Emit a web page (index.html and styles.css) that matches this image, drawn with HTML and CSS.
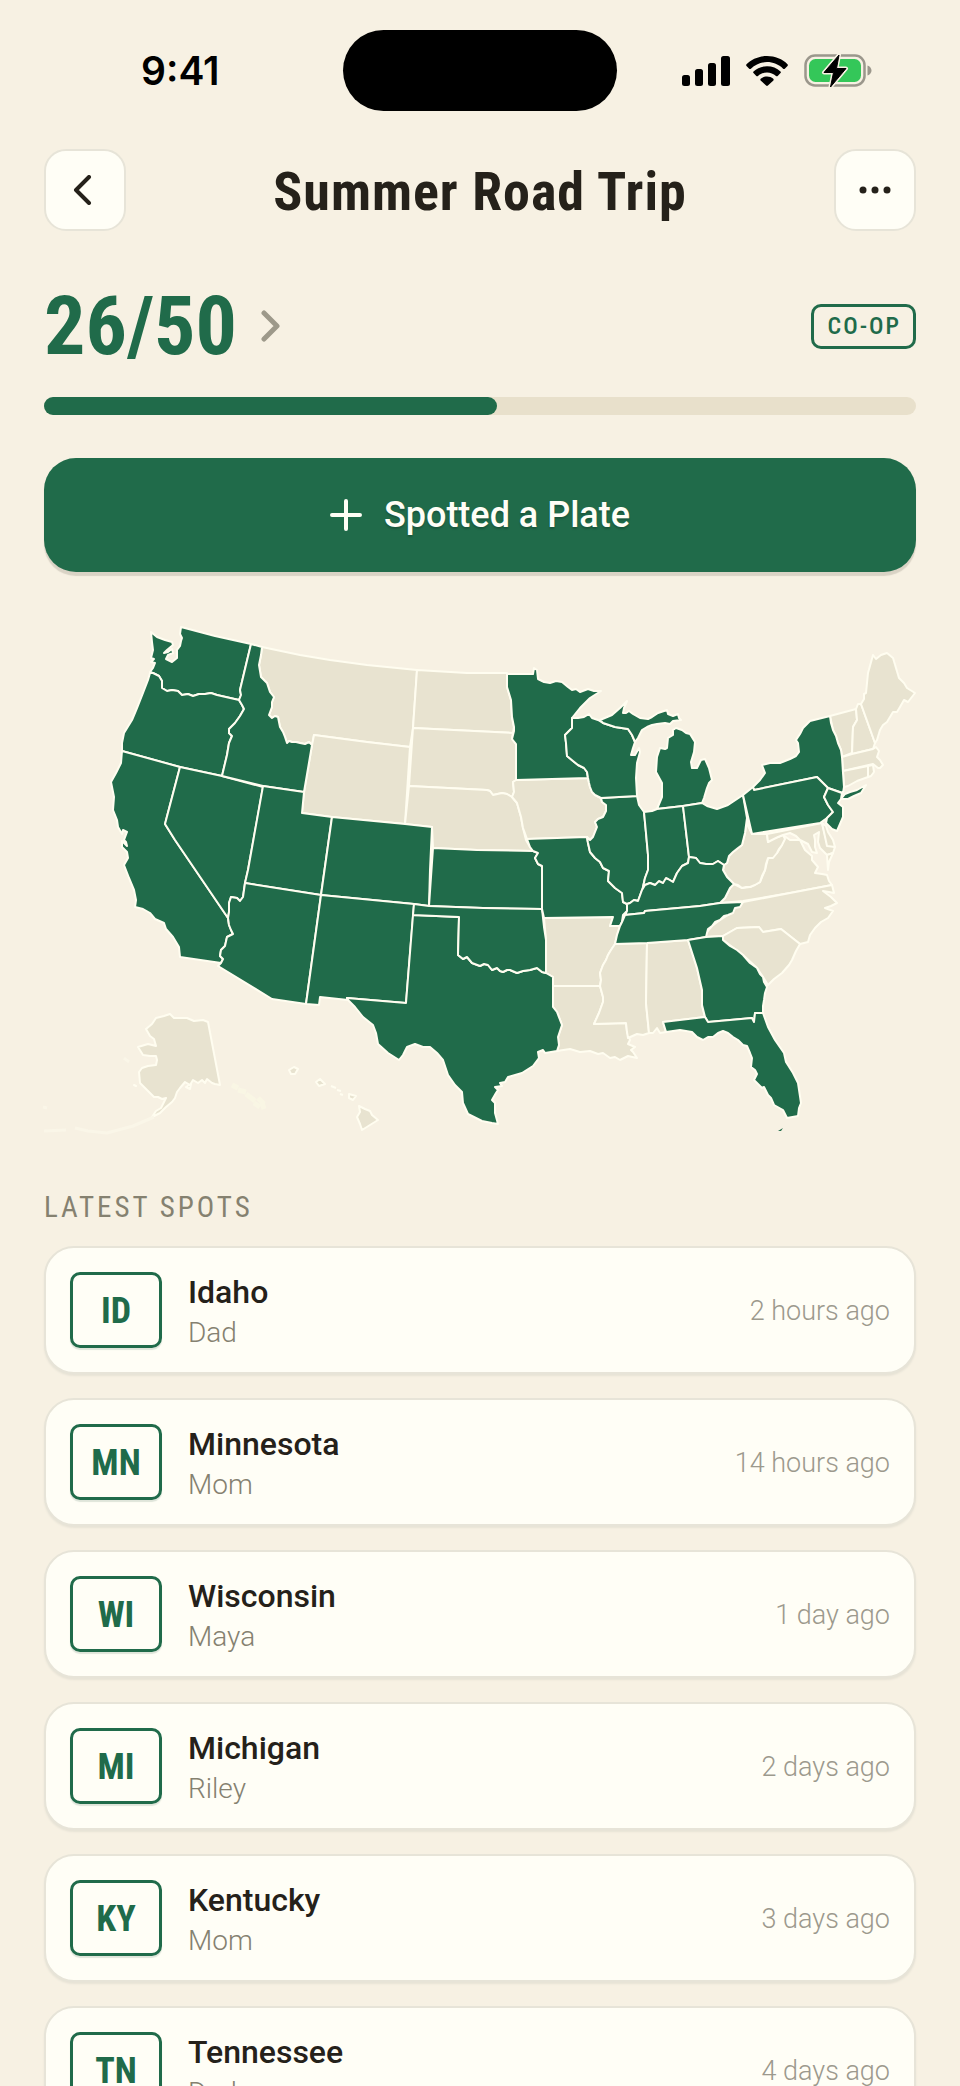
FILE: index.html
```html
<!DOCTYPE html>
<html lang="en">
<head>
    <meta charset="UTF-8">
    <meta name="viewport" content="width=device-width, initial-scale=1.0">
    <title>Summer Road Trip</title>
    <link rel="stylesheet" href="styles.css">
</head>
<body>
    <div class="app">
        <div class="status-bar">
            <span class="clock">9:41</span>
            <span class="island"></span>
            <span class="status-icons">
                <svg width="48" height="30" viewBox="0 0 48 30">
                    <rect x="0" y="19" width="8" height="11" rx="2.5"/>
                    <rect x="13" y="13" width="8" height="17" rx="2.5"/>
                    <rect x="26" y="7" width="8" height="23" rx="2.5"/>
                    <rect x="39" y="0" width="9" height="30" rx="2.5"/>
                </svg>
                <svg width="42" height="30" viewBox="0 0 42 30">
                    <path d="M21 0C29 0 36.500 3 41.500 8.200c.5.5.5 1.300 0 1.800l-2.700 2.700c-.5.5-1.200.5-1.700 0C32.700 8.500 27 6.100 21 6.100S9.300 8.500 4.900 12.700c-.5.5-1.200.5-1.700 0L.5 10c-.5-.5-.5-1.300 0-1.800C5.500 3 13 0 21 0z"/>
                    <path d="M21 10.200c5.200 0 9.900 1.900 13.500 5.200.5.500.5 1.200 0 1.700l-2.800 2.800c-.5.500-1.200.5-1.700.1-2.500-2.200-5.600-3.500-9-3.500s-6.500 1.300-9 3.500c-.5.400-1.200.4-1.700-.1l-2.800-2.800c-.5-.5-.5-1.200 0-1.700 3.600-3.300 8.300-5.200 13.500-5.200z"/>
                    <path d="M21 20.500c2.400 0 4.600.8 6.300 2.200.5.400.5 1.200.1 1.700l-5.500 5.200c-.5.500-1.300.5-1.800 0l-5.500-5.200c-.4-.5-.4-1.300.1-1.700 1.700-1.400 3.900-2.200 6.300-2.200z"/>
                </svg>
                <svg width="68" height="34" viewBox="0 0 68 34">
                    <rect x="1.500" y="1.500" width="59" height="30" rx="9.500" fill="none" stroke="#9b978c" stroke-width="2.500"/>
                    <path d="M63.500 11.500c2.500.8 4 2.800 4 5s-1.500 4.200-4 5z" fill="#9b978c"/>
                    <rect x="5" y="5" width="52" height="23" rx="6.500" fill="#34c759"/>
                    <path d="M35 1L20 18.500h9.500L26.500 33 42 14.500h-9.500z" stroke="#f8f1e3" stroke-width="4" stroke-linejoin="round"/>
                    <path d="M35 1L20 18.500h9.500L26.500 33 42 14.500h-9.500z" stroke="#000" stroke-width="1" stroke-linejoin="round"/>
                </svg>
            </span>
        </div>

        <header class="top-bar">
            <button class="icon-button" aria-label="Back">
                <svg width="24" height="30" viewBox="0 0 24 30"><path d="M16 2L3 15l13 13"/></svg>
            </button>
            <h1>Summer Road Trip</h1>
            <button class="icon-button" aria-label="More">
                <svg class="dots" width="32" height="8" viewBox="0 0 32 8"><circle cx="4" cy="4" r="3.500"/><circle cx="16" cy="4" r="3.500"/><circle cx="28" cy="4" r="3.500"/></svg>
            </button>
        </header>

        <main>
            <div class="score-row">
                <a class="score" href="#states">
                    <span>26/50</span>
                    <svg width="20" height="32" viewBox="0 0 20 32"><path d="M3 3l13 13L3 29"/></svg>
                </a>
                <span class="badge">CO-OP</span>
            </div>
            <div class="progress"><div class="progress-fill" style="width: 52%"></div></div>

            <button class="spot-button">
                <svg width="32" height="32" viewBox="0 0 32 32"><path d="M16 2v28M2 16h28"/></svg>
                <span>Spotted a Plate</span>
            </button>

            <svg id="states" class="map" viewBox="44 614 872 526" role="img" aria-label="Map of spotted states">
                <!-- not spotted yet -->
                <g class="missing">
                    <path d="M262 647L300 655 330 660 367 665 417 670 413 728 410 747 367 742 314 735 313 741 312 745 309 742 305 744 300 743 296 742 292 742 289 741 287 743 285 737 283 732 280 727 279 722 278 717 275 716 272 718 269 715 272 707 272 702 274 697 270 692 267 683 261 677 260 671 259 665 261 655z"/>
                    <path d="M314 735L367 742 410 747 405 824 332 817 302 813 304 792 312 745z"/>
                    <path d="M417 670L467 673 507 673 507 687 511 700 512 717 514 727 513 733 413 728z"/>
                    <path d="M413 728L513 733 512 739 516 744 516 780 513 782 514 792 512 797 507 794 502 793 493 795 490 791 487 790 409 786z"/>
                    <path d="M409 786L487 790 490 791 493 795 502 793 507 794 512 797 517 803 519 810 521 817 523 828 526 840 530 847 533 851 477 850 433 848 432 827 405 824z"/>
                    <path d="M516 780L588 778 589 783 590 787 592 792 595 795 601 798 602 802 606 805 606 811 603 817 598 819 595 822 597 827 595 832 593 837 590 840 587 837 527 839 523 828 521 817 519 810 517 803 512 797 514 792 513 782z"/>
                    <path d="M544 918L613 917 610 926 620 926 617 935 615 944 611 950 608 955 606 960 603 965 600 973 601 980 600 986 553 986 553 977 546 973 546 940z"/>
                    <path d="M553 986L600 986 603 997 603 1002 599 1013 594 1024 626 1023 627 1032 630 1040 628 1044 635 1047 631 1050 633 1052 637 1058 628 1056 624 1058 620 1060 615 1057 610 1058 603 1053 598 1054 590 1051 580 1052 570 1049 557 1051 559 1045 558 1037 562 1025 557 1012 553 1007z"/>
                    <path d="M615 944L647 943 646 1003 649 1033 643 1035 637 1034 628 1038 627 1032 626 1023 594 1024 599 1013 603 1002 603 997 600 986 601 980 600 973 603 965 606 960 608 955 611 950z"/>
                    <path d="M647 943L688 940 697 968 702 990 702 1005 705 1017 663 1022 666 1032 660 1033 657 1028 653 1033 649 1033 646 1003z"/>
                    <path d="M830 716L856 709 857 720 853 727 852 753 842 757 841 750 838 743 836 736 833 730z"/>
                    <path d="M856 709L858 704 861 704 875 743 873 749 852 754 853 727 857 720z"/>
                    <path d="M861 704L864 699 864 694 866 693 868 673 873 655 876 659 881 655 887 653 893 658 899 678 904 683 907 688 915 693 908 702 904 700 900 707 897 712 893 712 887 722 883 725 880 730 877 740 875 743z"/>
                    <path d="M842 757L852 754 873 749 876 747 879 751 877 757 880 760 883 765 880 768 878 768 873 764 843 771z"/>
                    <path d="M843 771L868 766 868 777 857 781 848 786 844 787z"/>
                    <path d="M868 766L873 765 874 772 871 776 868 777z"/>
                    <path d="M783 835L790 840 800 840 805 850 812 856 812 860 818 867 815 873 822 874 827 875 829 881 832 885 790 893 743 901 720 903 725 898 730 888 734 884 742 888 750 887 760 882 765 870 768 858 777 853 782 845z"/>
                    <path d="M747 818L748 826 752 834 767 834 768 842 773 838 778 837 783 835 785 839 782 845 779 849 777 853 773 858 768 858 766 864 765 870 762 876 760 882 755 885 750 887 746 887 742 888 738 885 734 884 730 880 727 877 723 870 724 865 727 863 729 856 733 852 738 848 742 845 745 833z"/>
                    <path d="M767 834L822 823 827 843 835 847 833 853 827 855 822 850 820 848 818 842 819 832 814 835 815 840 815 847 817 853 812 852 808 844 800 840 796 836 790 833 783 835 778 837 768 842z"/>
                    <path d="M822 823L826 826 828 832 833 840 835 847 827 846z"/>
                    <path d="M827 855L833 853 829 862 828 870z"/>
                    <path d="M743 902L790 893 832 885 834 893 829 892 823 891 831 897 837 903 831 906 825 908 833 911 828 918 821 922 815 928 810 935 808 942 804 943 800 944 781 929 763 932 759 927 737 928 723 936 706 937 706 933 712 926 720 920 728 915 735 908z"/>
                    <path d="M723 936L737 928 759 927 763 932 781 929 800 944 796 951 792 960 789 965 782 973 774 979 768 985 763 977 757 968 743 955 723 940z"/>
                    <!-- alaska -->
                    <path d="M170 1014L174 1018 187 1018 194 1021 203 1020 208 1022 220 1085 215 1084 212 1083 207 1079 205 1083 202 1080 198 1083 193 1080 190 1085 185 1082 180 1088 177 1092 175 1098 172 1102 166 1107 160 1113 152 1117 156 1111 161 1108 164 1102 166 1098 162 1099 158 1097 154 1097 151 1094 148 1091 145 1088 140 1083 139 1072 142 1068 148 1066 156 1065 157 1060 156 1056 150 1056 143 1055 138 1047 148 1044 156 1046 154 1039 150 1036 146 1029 152 1024 156 1018 164 1016z"/>
                    <path d="M186 1087l5-3-1 5zM134 1085l2 1z"/>
                    <path d="M232 1085l6 3M238 1090l8 2M246 1094l9 7M254 1103l6 4M258 1098l6 6M262 1102l2 7" class="islets"/>
                    <path d="M154 1117L133 1126 107 1133 88 1131 75 1128M66 1130L44 1131" class="reef"/>
                    <path d="M43 1107l4 1M124 1058l5 4" class="reef"/>
                    <!-- hawaii -->
                    <path d="M289 1070l5-3 4 2-3 5-4 0zM316 1082l4-3 5 5-6 2zM331 1086l5 2M337 1090l4 1M340 1094l3 1M349 1094l7 2-3 4-4-2zM359 1106L365 1109 370 1111 372 1115 378 1120 370 1125 362 1130 360 1124 357 1117 360 1112z"/>
                </g>
                <!-- spotted -->
                <g class="spotted">
                    <path d="M151 632L157 637 165 640 172 642 173 645 167 650 164 653 168 652 172 649 173 653 168 655 166 659 172 662 177 658 177 650 180 646 181 641 182 638 180 634 181 627 215 636 251 644 240 690 241 695 239 700 217 695 211 693 205 694 199 694 193 696 188 694 182 695 178 691 172 690 167 691 162 688 162 681 159 676 153 673 150 672 153 668 155 663 151 662 154 659 151 658 153 650 152 642z"/>
                    <path d="M150 673L153 673 159 676 162 681 162 688 167 691 172 690 178 691 182 695 188 694 193 696 199 694 205 694 211 693 217 695 239 700 242 705 244 709 240 716 235 723 229 729 229 733 232 736 229 743 227 755 222 776 180 767 122 751 122 743 124 733 132 720 137 708 143 693 148 680z"/>
                    <path d="M122 751L180 767 165 824 175 840 228 918 229 925 231 930 233 934 227 937 225 946 221 950 220 956 223 959 221 963 180 957 179 947 173 937 166 929 164 923 155 919 150 913 143 909 135 907 136 900 134 890 129 878 124 865 128 858 127 852 122 847 122 841 127 846 126 842 124 840 127 832 123 830 122 834 118 827 117 820 113 810 114 797 111 782 116 773 121 763z"/>
                    <path d="M180 767L222 776 263 787 248 870 245 883 243 897 240 901 237 898 231 897 229 903 229 912 228 918 175 840 165 824z"/>
                    <path d="M251 644L262 647 261 655 259 665 260 671 261 677 267 683 270 692 274 697 272 702 272 707 269 715 272 718 275 716 278 717 279 722 280 727 283 732 285 737 287 743 289 741 292 742 296 742 300 743 305 744 309 742 312 745 304 792 263 786 222 776 227 755 229 743 232 736 229 733 229 729 235 723 240 716 244 709 242 705 239 700 241 695 240 690z"/>
                    <path d="M263 786L304 792 302 813 332 817 321 895 245 883 248 870z"/>
                    <path d="M332 817L405 824 432 827 430 870 429 906 414 904 321 895z"/>
                    <path d="M245 883L321 895 306 1004 272 999 218 966 221 963 223 959 220 956 221 950 225 946 227 937 233 934 231 930 229 925 228 918 229 912 229 903 231 897 237 898 240 901 243 897z"/>
                    <path d="M321 895L414 904 406 1003 347 998 348 1000 320 997 319 1005 306 1004z"/>
                    <path d="M433 848L477 850 533 851 538 853 535 858 538 864 542 866 542 909 483 908 429 906z"/>
                    <path d="M413 915L459 917 458 955 463 959 467 957 472 963 480 966 484 964 488 965 492 970 497 968 500 971 503 972 507 970 510 970 517 973 523 971 530 970 537 968 542 972 546 973 553 977 553 1007 557 1012 562 1025 558 1037 559 1045 557 1051 545 1053 543 1050 538 1052 539 1058 533 1066 522 1073 508 1077 505 1082 500 1083 502 1086 495 1087 498 1090 496 1093 492 1100 495 1103 495 1113 498 1124 492 1123 482 1121 468 1114 463 1103 462 1092 455 1085 448 1075 443 1060 437 1053 430 1047 423 1047 415 1044 407 1047 403 1055 399 1060 388 1053 378 1044 376 1033 373 1025 363 1017 355 1007 348 1000 347 998 406 1003z"/>
                    <path d="M414 904L429 906 483 908 542 909 544 927 546 940 546 973 542 972 537 968 530 970 523 971 517 973 510 970 507 970 503 972 500 971 497 968 492 970 488 965 484 964 480 966 472 963 467 957 463 959 458 955 459 917 413 915z"/>
                    <path d="M507 674L533 674 534 668 537 670 538 679 544 682 550 683 556 681 562 682 568 687 572 690 576 689 580 692 588 689 594 691 601 691 590 698 580 708 572 718 572 728 565 735 566 743 567 756 573 761 578 765 584 768 587 772 588 778 516 780 516 744 512 739 514 731 514 727 512 717 511 700 507 687z"/>
                    <path d="M527 839L587 837 588 843 590 852 595 858 600 862 603 868 609 871 608 881 615 888 622 893 623 902 627 904 627 911 623 915 622 922 620 926 610 926 613 917 544 918 542 909 542 866 538 864 535 858 538 853 533 851 530 847z"/>
                    <path d="M601 798L637 796 639 805 644 812 646 833 648 855 648 870 645 878 643 887 642 890 638 901 634 900 630 903 627 904 623 902 622 893 615 888 608 881 609 871 603 868 600 862 595 858 590 852 588 843 587 837 590 840 593 837 595 832 597 827 595 822 598 819 603 817 606 811 606 805 602 802z"/>
                    <path d="M572 718L578 718 584 717 589 714 592 718 598 720 603 723 615 727 628 729 632 735 635 742 633 748 631 755 635 755 639 748 640 752 637 763 636 778 637 796 601 798 595 795 592 792 590 787 589 783 588 778 587 772 584 768 578 765 573 761 567 756 566 743 565 735 572 728z"/>
                    <path d="M600 720L612 715 620 708 627 701 624 708 623 713 626 713 629 711 633 714 640 718 648 719 652 717 658 713 667 710 668 714 673 716 678 714 679 718 681 720 673 721 670 724 665 723 657 724 652 725 647 727 642 730 638 738 635 742 632 735 628 729 615 727 603 723z"/>
                    <path d="M673 730L676 728 682 730 686 733 690 734 695 742 694 752 691 762 692 768 697 768 701 760 705 759 709 768 712 780 709 783 707 788 704 798 702 803 683 806 657 809 662 797 662 783 656 772 657 757 660 748 665 749 667 748 668 738 673 735z"/>
                    <path d="M644 812L652 811 657 809 683 806 689 857 688 863 682 866 677 873 673 882 668 879 663 883 655 885 650 883 645 885 643 887 645 878 648 870 648 855 646 833z"/>
                    <path d="M683 806L702 803 707 806 717 809 728 805 743 795 747 818 745 833 742 845 738 848 733 852 729 856 727 863 724 865 718 861 713 864 706 864 700 863 696 858 689 857z"/>
                    <path d="M627 904L630 903 634 900 638 901 642 890 645 885 650 883 655 885 659 881 663 883 666 878 668 879 673 882 677 873 682 866 688 863 689 857 696 858 700 863 706 864 713 864 718 861 724 865 723 870 727 877 734 884 730 888 725 898 720 903 700 906 645 911 644 913 625 915 627 911z"/>
                    <path d="M625 915L644 913 645 911 700 906 720 903 743 902 740 907 735 908 733 913 728 915 724 916 720 920 715 922 712 926 708 929 706 937 688 940 647 943 615 944 617 935 620 926 622 922z"/>
                    <path d="M688 940L706 937 723 936 723 940 730 946 737 950 743 955 750 963 757 968 760 974 763 977 764 982 767 987 765 993 764 1000 763 1006 763 1013 755 1013 754 1022 752 1018 708 1022 705 1017 702 1005 702 990 697 968z"/>
                    <path d="M663 1022L705 1017 708 1022 752 1018 754 1022 755 1013 763 1013 768 1027 775 1040 784 1053 786 1062 793 1073 798 1083 801 1103 799 1108 798 1116 787 1118 783 1110 774 1105 771 1098 768 1095 764 1087 762 1088 758 1084 754 1080 757 1074 755 1070 751 1067 752 1058 750 1053 747 1046 743 1045 738 1040 733 1037 728 1033 723 1031 718 1033 713 1037 708 1037 703 1040 697 1037 692 1032 680 1030 666 1032z"/>
                    <path d="M754 790L753 787 760 780 765 773 762 765 770 763 780 763 790 759 796 756 799 752 798 743 796 740 800 734 803 728 810 721 830 716 831 723 833 730 836 736 838 743 841 750 842 757 843 773 844 787 843 793 828 788 823 783 817 777z"/>
                    <path d="M841 799L845 794 850 792 857 790 866 785 861 793 854 796 848 799z"/>
                    <path d="M743 795L753 787 754 790 817 777 823 783 828 788 824 797 828 805 833 812 827 818 820 823 752 834z"/>
                    <path d="M828 788L842 793 841 799 838 803 843 807 843 817 840 824 837 831 832 829 826 823 827 818 833 812 828 805 824 797z"/>
                    <path d="M778 1131l5-3-2 3z" class="key"/>
                </g>
            </svg>

            <section>
                <h2>Latest Spots</h2>
                <ul class="spots">
                    <li class="spot">
                        <span class="plate">ID</span>
                        <div class="who"><strong>Idaho</strong><span>Dad</span></div>
                        <time>2 hours ago</time>
                    </li>
                    <li class="spot">
                        <span class="plate">MN</span>
                        <div class="who"><strong>Minnesota</strong><span>Mom</span></div>
                        <time>14 hours ago</time>
                    </li>
                    <li class="spot">
                        <span class="plate">WI</span>
                        <div class="who"><strong>Wisconsin</strong><span>Maya</span></div>
                        <time>1 day ago</time>
                    </li>
                    <li class="spot">
                        <span class="plate">MI</span>
                        <div class="who"><strong>Michigan</strong><span>Riley</span></div>
                        <time>2 days ago</time>
                    </li>
                    <li class="spot">
                        <span class="plate">KY</span>
                        <div class="who"><strong>Kentucky</strong><span>Mom</span></div>
                        <time>3 days ago</time>
                    </li>
                    <li class="spot">
                        <span class="plate">TN</span>
                        <div class="who"><strong>Tennessee</strong><span>Dad</span></div>
                        <time>4 days ago</time>
                    </li>
                </ul>
            </section>
        </main>
    </div>
</body>
</html>
```
FILE: styles.css
```css
* {
    box-sizing: border-box;
}
body {
    margin: 0;
    background-color: #f7f1e3;
    color: #25211a;
    font-family: Roboto, "Liberation Sans", sans-serif;
}
.app {
    height: 100vh;
    overflow: hidden;
    padding: 0 44px;
}
h1, h2, ul {
    margin: 0;
    padding: 0;
}
button {
    border: none;
    font-family: inherit;
    cursor: pointer;
}
.status-bar {
    display: grid;
    grid-template-columns: 1fr 274px 1fr;
    align-items: center;
    padding-top: 30px;
}
.clock {
    padding-left: 97px;
    color: #000;
    font-family: Inter, sans-serif;
    font-size: 39px;
    font-weight: 600;
}
.island {
    height: 81px;
    border-radius: 41px;
    background-color: #000;
}
.status-icons {
    display: flex;
    justify-content: flex-end;
    align-items: center;
    gap: 16px;
    padding-right: 44px;
}
.top-bar {
    display: flex;
    justify-content: space-between;
    align-items: center;
    margin-top: 38px;
}
.icon-button {
    display: flex;
    justify-content: center;
    align-items: center;
    width: 82px;
    height: 82px;
    padding: 0;
    border: 2px solid #e7e4d8;
    border-radius: 22px;
    background-color: #fffef6;
}
.icon-button path {
    fill: none;
    stroke: #25211a;
    stroke-width: 4;
    stroke-linecap: round;
    stroke-linejoin: round;
}
.dots {
    fill: #25211a;
}
h1, .score, .badge, h2, .plate {
    font-family: "Roboto Condensed", "Liberation Sans Narrow", Roboto, sans-serif;
}
h1 {
    padding-top: 4px;
    font-size: 54px;
    line-height: 78px;
    font-weight: 700;
    letter-spacing: 1px;
}
.score-row {
    display: flex;
    justify-content: space-between;
    align-items: center;
    margin-top: 50px;
}
.score {
    display: flex;
    align-items: center;
    gap: 24px;
    color: #206b4a;
    font-size: 82px;
    line-height: 90px;
    font-weight: 700;
    text-decoration: none;
}
.score path {
    fill: none;
    stroke: #9d998a;
    stroke-width: 5;
    stroke-linecap: round;
    stroke-linejoin: round;
}
.badge {
    padding: 0 12px 0 14px;
    border: 3px solid #206b4a;
    border-radius: 10px;
    color: #206b4a;
    font-size: 24px;
    line-height: 39px;
    font-weight: 500;
    letter-spacing: 2px;
}
.progress {
    height: 18px;
    margin-top: 26px;
    border-radius: 9px;
    background-color: #e8e0cb;
}
.progress-fill {
    height: 100%;
    border-radius: 9px;
    background-color: #206b4a;
}
.spot-button {
    display: flex;
    justify-content: center;
    align-items: center;
    gap: 22px;
    width: 100%;
    height: 114px;
    margin-top: 43px;
    border-radius: 32px;
    background-color: #206b4a;
    box-shadow: 0 4px 1px #d9d3c5;
    color: #fffef6;
    font-size: 36px;
    font-weight: 500;
    text-shadow: 0 2px 2px rgba(0,0,0,0.2);
}
.spot-button path {
    fill: none;
    stroke: #fffef6;
    stroke-width: 4;
    stroke-linecap: round;
}
.map {
    display: block;
    width: 100%;
    margin-top: 42px;
    overflow: visible;
}
.map path {
    stroke: #fffdf0;
    stroke-width: 2;
    stroke-linejoin: round;
}
.missing {
    fill: #e8e3d0;
}
.spotted {
    fill: #206b4a;
}
.map .reef {
    fill: none;
    stroke: #faf6e8;
    stroke-width: 3;
}
.map .islets {
    stroke: #f9f6e4;
    stroke-width: 5;
}
.map .key {
    stroke: none;
}
h2 {
    margin-top: 46px;
    color: #858170;
    font-size: 29px;
    line-height: 42px;
    font-weight: 400;
    letter-spacing: 3px;
    text-transform: uppercase;
}
.spots {
    display: flex;
    flex-direction: column;
    gap: 24px;
    margin-top: 18px;
    list-style: none;
}
.spot {
    display: flex;
    align-items: center;
    gap: 26px;
    height: 128px;
    padding: 0 24px;
    border: 2px solid #e7e4d8;
    border-radius: 30px;
    background-color: #fffef6;
    box-shadow: 0 2px 2px #e7e3d6;
}
.plate {
    width: 92px;
    padding-top: 2px;
    border: 3px solid #206b4a;
    border-radius: 10px;
    box-shadow: 0 2px 1px #dfe5da;
    color: #206b4a;
    font-size: 36px;
    line-height: 68px;
    font-weight: 700;
    text-align: center;
}
.who {
    display: flex;
    flex: 1;
    flex-direction: column;
    padding-top: 4px;
}
.who strong {
    font-size: 32px;
    line-height: 42px;
    font-weight: 500;
}
.who span {
    color: #858170;
    font-size: 28px;
    line-height: 40px;
    font-weight: 300;
}
time {
    padding-top: 2px;
    color: #9c998d;
    font-size: 27px;
    font-weight: 300;
}
```
